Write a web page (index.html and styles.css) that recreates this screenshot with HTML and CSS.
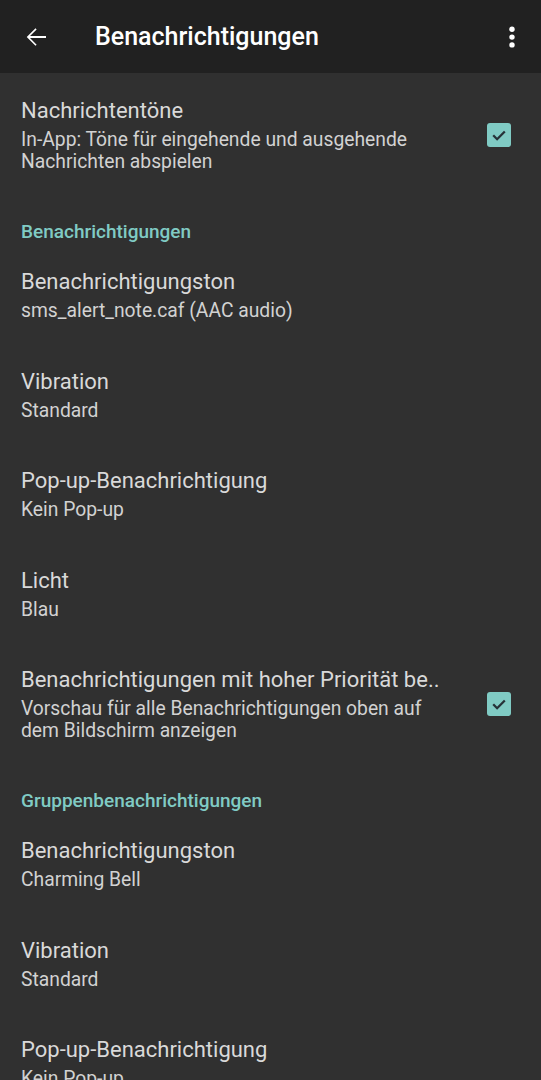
FILE: index.html
```html
<!DOCTYPE html>
<html lang="de">
<head>
    <meta charset="UTF-8">
    <meta name="viewport" content="width=device-width, initial-scale=1.0">
    <title>Benachrichtigungen</title>
    <link rel="stylesheet" href="styles.css">
</head>
<body>
<div class="toolbar">
  <svg class="back" width="30" height="30" viewBox="0 0 24 24">
    <path d="M20 11.2H7.2l5.3-5.3L11.6 5l-7 7 7 7 .9-.9-5.3-5.3H20v-1.6z" fill="#fff"/>
  </svg>
  <div class="toolbar-title">Benachrichtigungen</div>
  <svg class="more" width="24" height="30" viewBox="0 0 24 30">
    <circle cx="12" cy="7.3" r="2.7" fill="#fff"/>
    <circle cx="12" cy="15.1" r="2.7" fill="#fff"/>
    <circle cx="12" cy="22.9" r="2.7" fill="#fff"/>
  </svg>
</div>

<div class="pref">
  <div class="pref-text">
    <div class="pref-title">Nachrichtentöne</div>
    <div class="pref-summary">In-App: Töne für eingehende und ausgehende Nachrichten abspielen</div>
  </div>
  <div class="check">
    <svg width="24" height="24" viewBox="0 0 24 24"><path d="M6.2 12.3l3.9 3.9 7.7-7.7" stroke="#263238" stroke-width="2.3" fill="none"/></svg>
  </div>
</div>

<div class="category">Benachrichtigungen</div>
<div class="pref">
  <div class="pref-text">
    <div class="pref-title">Benachrichtigungston</div>
    <div class="pref-summary">sms_alert_note.caf (AAC audio)</div>
  </div>
</div>
<div class="pref">
  <div class="pref-text">
    <div class="pref-title">Vibration</div>
    <div class="pref-summary">Standard</div>
  </div>
</div>
<div class="pref">
  <div class="pref-text">
    <div class="pref-title">Pop-up-Benachrichtigung</div>
    <div class="pref-summary">Kein Pop-up</div>
  </div>
</div>
<div class="pref">
  <div class="pref-text">
    <div class="pref-title">Licht</div>
    <div class="pref-summary">Blau</div>
  </div>
</div>
<div class="pref">
  <div class="pref-text">
    <div class="pref-title nowrap">Benachrichtigungen mit hoher Priorität be..</div>
    <div class="pref-summary">Vorschau für alle Benachrichtigungen oben auf dem Bildschirm anzeigen</div>
  </div>
  <div class="check">
    <svg width="24" height="24" viewBox="0 0 24 24"><path d="M6.2 12.3l3.9 3.9 7.7-7.7" stroke="#263238" stroke-width="2.3" fill="none"/></svg>
  </div>
</div>

<div class="category">Gruppenbenachrichtigungen</div>
<div class="pref">
  <div class="pref-text">
    <div class="pref-title">Benachrichtigungston</div>
    <div class="pref-summary">Charming Bell</div>
  </div>
</div>
<div class="pref">
  <div class="pref-text">
    <div class="pref-title">Vibration</div>
    <div class="pref-summary">Standard</div>
  </div>
</div>
<div class="pref">
  <div class="pref-text">
    <div class="pref-title">Pop-up-Benachrichtigung</div>
    <div class="pref-summary">Kein Pop-up</div>
  </div>
</div>
</body>
</html>
```

FILE: styles.css
```css
body {
  margin: 0;
  background: #303030;
  font-family: Roboto, "Noto Sans", sans-serif;
  overflow: hidden;
}

/* top app bar */
.toolbar {
  height: 73px;
  background: #212121;
  display: flex;
  align-items: center;
  padding: 0 17px 0 21px;
}
.back {
  flex: none;
}
.toolbar-title {
  flex: 1;
  margin-left: 44px;
  color: #fff;
  font-size: 25px;
  font-weight: 500;
}
.more {
  flex: none;
}

/* preference rows */
.pref {
  display: flex;
  align-items: center;
  padding: 24px 30px 21.5px 21px;
}
.pref-text {
  flex: 1;
  min-width: 0;
  padding-right: 42px;
}
.pref-title {
  color: #d9d9d9;
  font-size: 22px;
  line-height: 28px;
}
.nowrap {
  white-space: nowrap;
  margin-right: -42px;
}
.pref-summary {
  margin-top: 4px;
  color: #d2d2d2;
  font-size: 19.3px;
  line-height: 22px;
}
.check {
  flex: none;
  width: 24px;
  height: 24px;
  border-radius: 3px;
  background: #80cbc4;
}
.check svg {
  display: block;
}

.category {
  padding: 25.5px 21px 0;
  color: #80cbc4;
  font-size: 19px;
  font-weight: 500;
  line-height: 24px;
}
```
